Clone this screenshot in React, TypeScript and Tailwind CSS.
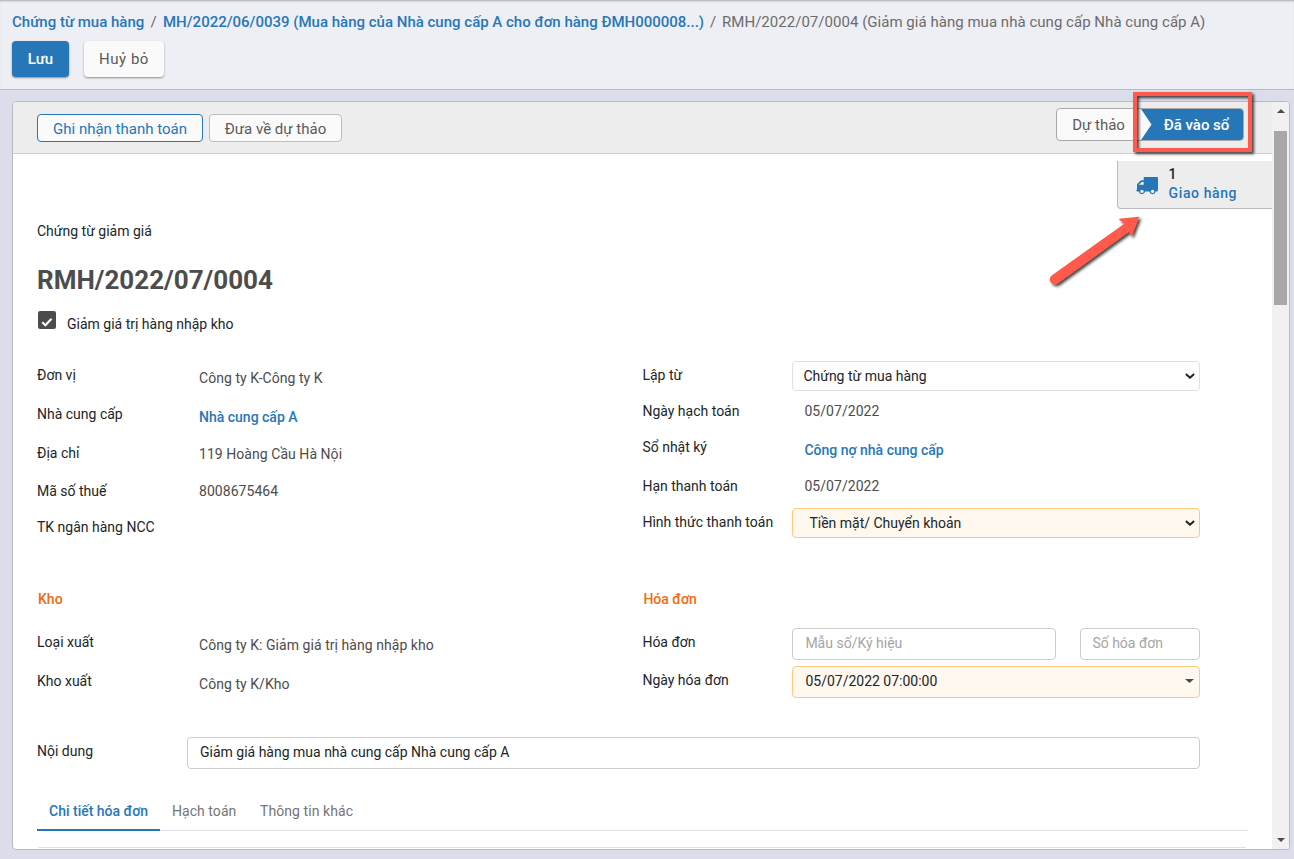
import type { ReactNode } from 'react';

function Field({ label, className, children }: { label: string; className: string; children?: ReactNode }) {
  return (
    <div className={`flex items-start ${className}`}>
      <div className="w-[150px] shrink-0 whitespace-nowrap pt-1 text-[#212529]">{label}</div>
      <div className="flex min-w-0 flex-1">{children}</div>
    </div>
  );
}

function Value({ className = 'pt-1', children }: { className?: string; children: ReactNode }) {
  return <span className={`whitespace-nowrap pl-3 tracking-[0.05px] text-[#4c4c4c] ${className}`}>{children}</span>;
}

function Link({ className = 'pt-[7px]', children }: { className?: string; children: ReactNode }) {
  return <a className={`whitespace-nowrap pl-3 font-medium text-[#2777b8] ${className}`}>{children}</a>;
}

function Chevron() {
  return (
    <svg width="10" height="6" viewBox="0 0 10 6" fill="none" stroke="#222" strokeWidth="2">
      <path d="M0.9 0.9 L5 4.7 L9.1 0.9" />
    </svg>
  );
}

function Caret({ className }: { className: string }) {
  return (
    <svg className={className} viewBox="0 0 8 4" preserveAspectRatio="none" fill="#4c4c4c">
      <path d="M0 0h8L4 4z" />
    </svg>
  );
}

export default function App() {
  return (
    <div className="flex h-[859px] w-[1294px] flex-col overflow-hidden bg-[#dcddeb] font-['Roboto',sans-serif] text-[14px] leading-5 text-[#212529]">
      <header className="h-[90px] shrink-0 border-b border-[#b9b9c6] bg-[#eeeff5] shadow-[inset_0_2px_2px_-1px_#a8a8b0]">
        <nav className="flex h-[41px] items-start whitespace-nowrap pl-3 pt-3 text-[15px] text-[#6c6c6c]">
          <a className="w-[132px] font-medium text-[#2777b8]">Chứng từ mua hàng</a>
          <span className="w-[19px] text-center">/</span>
          <a className="w-[541px] font-medium text-[#2777b8]">
            MH/2022/06/0039 (Mua hàng của Nhà cung cấp A cho đơn hàng ĐMH000008...)
          </a>
          <span className="w-[18px] text-center">/</span>
          <span className="tracking-[0.03px]">RMH/2022/07/0004 (Giảm giá hàng mua nhà cung cấp Nhà cung cấp A)</span>
        </nav>
        <div className="flex gap-[15px] pl-3 text-[15px]">
          <button className="h-9 w-[57px] rounded bg-[#2777b8] font-medium text-white shadow-[0_1px_2px_rgba(0,0,0,.4)]">Lưu</button>
          <button className="h-9 w-20 rounded bg-[#fafafa] tracking-[0.5px] text-[#5a5a5a] shadow-[0_1px_2px_rgba(0,0,0,.4)]">Huỷ bỏ</button>
        </div>
      </header>

      <main className="ml-3 mt-[11px] flex h-[749px] w-[1278px] shrink-0 overflow-hidden rounded border border-[#b9b9c0] bg-white">
        <div className="flex min-w-0 flex-1 flex-col">
          <div className="flex h-[52px] shrink-0 items-start border-b border-[#cfcfd4] bg-[#ededed] pl-6">
            <button className="mt-3 h-7 w-[166px] rounded border border-[#2777b8] bg-[#fafafa] pt-0.5 text-[15px] text-[#2777b8]">
              Ghi nhận thanh toán
            </button>
            <button className="ml-1.5 mt-3 h-7 w-[133px] rounded border border-[#bcbcbc] bg-[#fafafa] pt-0.5 text-[15px] text-[#5a5a5a]">
              Đưa về dự thảo
            </button>
            <div className="ml-auto mr-7 mt-1.5 flex h-[33px] w-[188px] overflow-hidden rounded border border-[#aaa] bg-[#fafafa] text-[15px]">
              <div className="w-[84px] pr-px pt-1.5 text-center text-[#5a5a5a]">Dự thảo</div>
              <div className="flex flex-1 bg-[#2777b8]">
                <svg width="11" height="31" viewBox="0 0 11 31">
                  <path d="M0 0L10.5 15.5L0 31z" fill="#fafafa" />
                </svg>
                <div className="flex-1 pr-0.5 pt-1.5 text-center font-medium text-white">Đã vào sổ</div>
              </div>
            </div>
          </div>

          <div className="mt-[7px] flex h-12 w-[155px] shrink-0 self-end rounded-bl border-b border-l border-[#bcbcbc] bg-[#ededed]">
            <svg className="ml-[18px] mt-4" width="22" height="18" viewBox="0 0 22 18" fill="#2777b8">
              <path d="M8.5 0H21.2a.8.8 0 0 1 .8.8V12.9a1.6 1.6 0 0 1-1.6 1.6h-.7a3.2 3.2 0 0 1-6.3 0H9.1a3.2 3.2 0 0 1-6.3 0H1.4a1 1 0 0 1-1-1c0-.5.6-.7.6-1.2V8.2c0-.6.2-1.1.6-1.6L4.2 3.9c.4-.5 1-.7 1.6-.7h1.9V.8c0-.5.3-.8.8-.8z" />
              <path d="M3 7.8h4.7V4.9H5.8L3 7.5z" fill="#ededed" />
              <circle cx="6" cy="14.4" r="1.7" fill="#ededed" />
              <circle cx="16.6" cy="14.4" r="1.7" fill="#ededed" />
            </svg>
            <div className="ml-[10.6px] mt-1 flex flex-col font-medium leading-[19px]">
              <span>1</span>
              <span className="whitespace-nowrap tracking-[0.6px] text-[#2777b8]">Giao hàng</span>
            </div>
          </div>

          <div className="flex flex-col pl-6">
            <div className="mt-3">Chứng từ giảm giá</div>
            <h1 className="mt-[21px] text-[26px] font-bold leading-9 text-[#4c4c4c]">RMH/2022/07/0004</h1>
            <div className="mt-3 flex h-6">
              <svg className="ml-px mt-px" width="18" height="18" viewBox="0 0 18 18">
                <rect width="18" height="18" rx="2" fill="#4c4c4c" />
                <path d="M4.3 11.3L7.4 14.2L13.5 7.7" fill="none" stroke="#fff" strokeWidth="2.2" />
              </svg>
              <span className="ml-[11px] mt-1">Giảm giá trị hàng nhập kho</span>
            </div>

            <div className="mt-[27px] flex h-[228px]">
              <div className="w-[605.4px]">
                <Field label="Đơn vị" className="h-[39px]"><Value className="pt-[7px]">Công ty K-Công ty K</Value></Field>
                <Field label="Nhà cung cấp" className="h-[39px]"><Link>Nhà cung cấp A</Link></Field>
                <Field label="Địa chỉ" className="h-[38px]"><Value className="pt-[5px]">119 Hoàng Cầu Hà Nội</Value></Field>
                <Field label="Mã số thuế" className="h-9"><Value>8008675464</Value></Field>
                <Field label="TK ngân hàng NCC" className="h-9" />
              </div>
              <div className="w-[557.6px]">
                <Field label="Lập từ" className="h-9">
                  <div className="flex h-[30px] flex-1 items-center justify-between rounded border border-[#dee0e2] pl-2.5 pr-1">
                    <span>Chứng từ mua hàng</span>
                    <Chevron />
                  </div>
                </Field>
                <Field label="Ngày hạch toán" className="h-9"><Value>05/07/2022</Value></Field>
                <Field label="Sổ nhật ký" className="h-[39px]"><Link>Công nợ nhà cung cấp</Link></Field>
                <Field label="Hạn thanh toán" className="h-9"><Value>05/07/2022</Value></Field>
                <Field label="Hình thức thanh toán" className="h-[30px]">
                  <div className="flex h-[30px] flex-1 items-center justify-between rounded border border-[#fdc97c] bg-[#fff8ef] pl-4 pr-1">
                    <span>Tiền mặt/ Chuyển khoản</span>
                    <Chevron />
                  </div>
                </Field>
              </div>
            </div>

            <div className="flex h-[39px] font-medium text-[#f26a0f]">
              <div className="w-[605.4px] pl-px">Kho</div>
              <div className="pl-px">Hóa đơn</div>
            </div>
            <div className="flex h-[109px]">
              <div className="w-[605.4px]">
                <Field label="Loại xuất" className="h-[39px]"><Value className="pt-[7px]">Công ty K: Giảm giá trị hàng nhập kho</Value></Field>
                <Field label="Kho xuất" className="h-[39px]"><Value className="pt-[7px]">Công ty K/Kho</Value></Field>
              </div>
              <div className="w-[557.6px]">
                <Field label="Hóa đơn" className="h-[38px]">
                  <div className="h-8 w-[264px] rounded border border-[#ccc] pl-3 pt-1 text-[#a5a5a5]">Mẫu số/Ký hiệu</div>
                  <div className="ml-6 h-8 flex-1 rounded border border-[#ccc] pl-[11px] pt-1 text-[#a5a5a5]">Số hóa đơn</div>
                </Field>
                <Field label="Ngày hóa đơn" className="h-8">
                  <div className="flex h-8 flex-1 justify-between rounded border border-[#fdc97c] bg-[#fff8ef] pl-3 pr-[5px] pt-1">
                    <span>05/07/2022 07:00:00</span>
                    <Caret className="mt-2 h-1 w-[9px]" />
                  </div>
                </Field>
              </div>
            </div>
            <Field label="Nội dung" className="h-[58px] w-[1163px]">
              <div className="h-8 flex-1 rounded border border-[#ccc] pl-3 pt-1">Giảm giá hàng mua nhà cung cấp Nhà cung cấp A</div>
            </Field>
            <div className="flex h-9 w-[1211px] border-b border-[#dee2e6] text-[#757575]">
              <div className="h-9 w-[123px] border-b-2 border-[#2777b8] pl-3 pt-1.5 font-medium text-[#2777b8]">Chi tiết hóa đơn</div>
              <div className="w-[88px] pl-3 pt-1.5 tracking-[0.05px]">Hạch toán</div>
              <div className="pl-3 pt-1.5 tracking-[0.08px]">Thông tin khác</div>
            </div>
            <div className="ml-px mt-4 h-px w-[1208px] bg-[#dee2e6]" />
          </div>
        </div>

        <div className="flex w-[17px] shrink-0 flex-col items-center bg-[#f1f1f1]">
          <Caret className="mt-[7px] h-1 w-2 rotate-180" />
          <div className="mt-[18px] h-[174px] w-[13px] bg-[#a8a8a8]" />
          <Caret className="mb-[7px] mt-auto h-1 w-2" />
        </div>
      </main>

      <svg className="pointer-events-none absolute left-[1040px] top-[85px]" width="254" height="215" viewBox="1040 85 254 215">
        <defs>
          <filter id="drop" x="-20%" y="-20%" width="150%" height="150%">
            <feDropShadow dx="2" dy="2" stdDeviation="1.4" floodColor="#000" floodOpacity="0.75" />
          </filter>
        </defs>
        <g filter="url(#drop)">
          <rect x="1135" y="94" width="115" height="56" fill="none" stroke="#ff5a4c" strokeWidth="4" />
          <path d="M1051.7 275.4L1124.3 223.8L1119 219.6Q1119 218.6 1121 218.6L1139.3 216.8L1132 235.6Q1131 236.5 1130.4 235L1129.5 231.6L1058 283.3A4.9 4.9 0 0 1 1051.7 275.4z" fill="#ff5a4c" />
        </g>
      </svg>
    </div>
  );
}
